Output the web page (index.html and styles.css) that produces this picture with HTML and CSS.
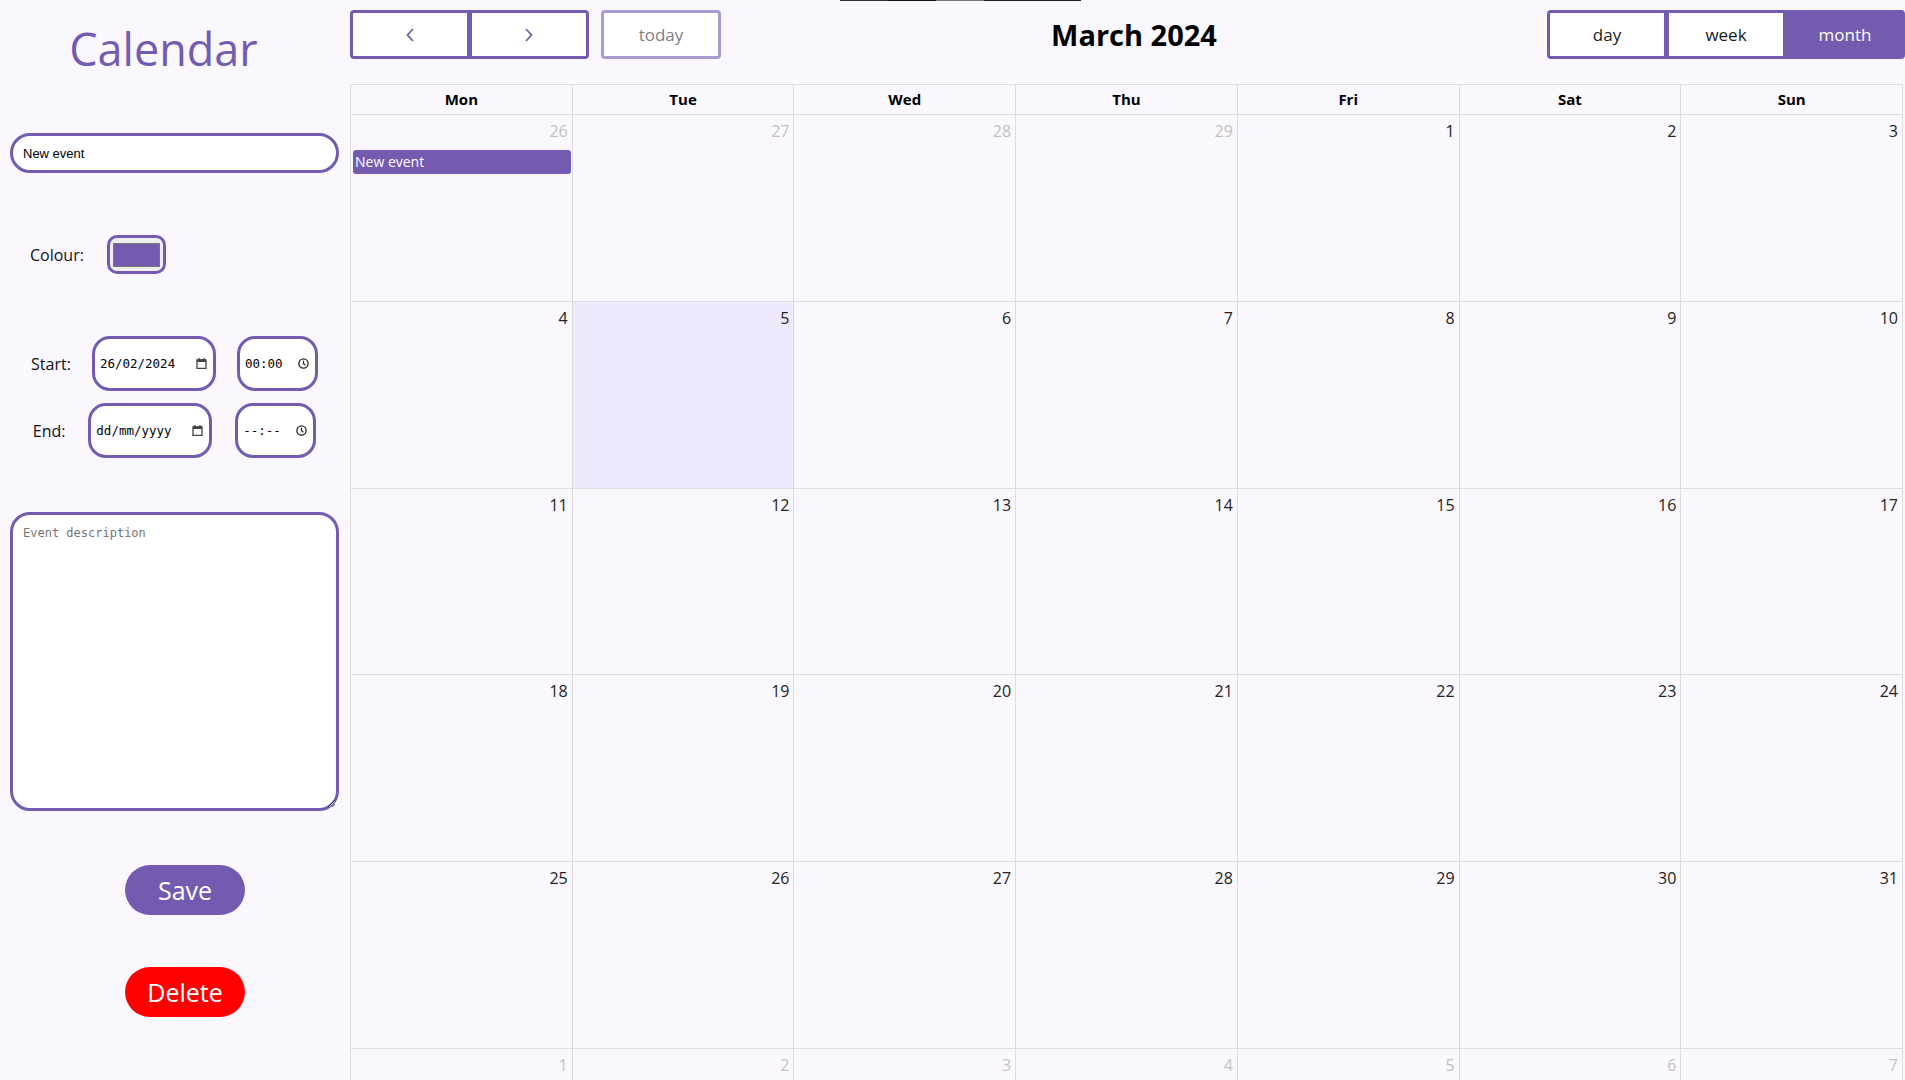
FILE: index.html
```html
<!DOCTYPE html>
<html lang="en">
<head>
<meta charset="utf-8">
<title>Calendar</title>
<link rel="stylesheet" href="styles.css">
</head>
<body>
<div class="top-mark"></div>
<aside class="sidebar">
  <h1 class="brand">Calendar</h1>
  <input class="title-input" type="text" value="New event">
  <div class="colour-row">
    <span class="label colour-label">Colour:</span>
    <span class="colour-pick"><span class="swatch"></span></span>
  </div>
  <div class="time-row">
    <span class="label">Start:</span>
    <span class="field date"><span class="val">26/02/2024</span>
      <svg class="ico" viewBox="0 0 11 11" width="11" height="11"><path d="M1 2h9v8.5H1z" fill="none" stroke="#444" stroke-width="1.3"/><path d="M1 1.5h9v2.5H1z" fill="#444"/><path d="M3 0v2M8 0v2" stroke="#444" stroke-width="1.3"/></svg>
    </span>
    <span class="field time"><span class="val">00:00</span>
      <svg class="ico" viewBox="0 0 11 11" width="11" height="11"><circle cx="5.5" cy="5.5" r="4.6" fill="none" stroke="#222" stroke-width="1.3"/><path d="M5.5 2.8v2.9l2 1.5" fill="none" stroke="#222" stroke-width="1.2"/></svg>
    </span>
  </div>
  <div class="time-row end">
    <span class="label">End:</span>
    <span class="field date"><span class="val">dd/mm/yyyy</span>
      <svg class="ico" viewBox="0 0 11 11" width="11" height="11"><path d="M1 2h9v8.5H1z" fill="none" stroke="#444" stroke-width="1.3"/><path d="M1 1.5h9v2.5H1z" fill="#444"/><path d="M3 0v2M8 0v2" stroke="#444" stroke-width="1.3"/></svg>
    </span>
    <span class="field time"><span class="val">--:--</span>
      <svg class="ico" viewBox="0 0 11 11" width="11" height="11"><circle cx="5.5" cy="5.5" r="4.6" fill="none" stroke="#222" stroke-width="1.3"/><path d="M5.5 2.8v2.9l2 1.5" fill="none" stroke="#222" stroke-width="1.2"/></svg>
    </span>
  </div>
  <textarea class="desc" placeholder="Event description"></textarea>
  <button class="pill save">Save</button>
  <button class="pill delete">Delete</button>
</aside>
<main class="calendar">
  <div class="toolbar">
    <div class="tb-left">
      <div class="group">
        <button class="btn"><svg viewBox="0 0 8 14" width="8" height="14"><polyline points="7,1 1.5,7 7,13" fill="none" stroke="#735cb0" stroke-width="1.8"/></svg></button>
        <button class="btn"><svg viewBox="0 0 8 14" width="8" height="14"><polyline points="1,1 6.5,7 1,13" fill="none" stroke="#735cb0" stroke-width="1.8"/></svg></button>
      </div>
      <button class="btn today">today</button>
    </div>
    <h2 class="title">March 2024</h2>
    <div class="group">
      <button class="btn">day</button>
      <button class="btn">week</button>
      <button class="btn active">month</button>
    </div>
  </div>
  <div class="grid">
    <div class="head">Mon</div><div class="head">Tue</div><div class="head">Wed</div><div class="head">Thu</div><div class="head">Fri</div><div class="head">Sat</div><div class="head">Sun</div>

    <div class="day other"><div class="num">26</div><div class="event">New event</div></div>
    <div class="day other"><div class="num">27</div></div>
    <div class="day other"><div class="num">28</div></div>
    <div class="day other"><div class="num">29</div></div>
    <div class="day"><div class="num">1</div></div>
    <div class="day"><div class="num">2</div></div>
    <div class="day"><div class="num">3</div></div>

    <div class="day"><div class="num">4</div></div>
    <div class="day today-cell"><div class="num">5</div></div>
    <div class="day"><div class="num">6</div></div>
    <div class="day"><div class="num">7</div></div>
    <div class="day"><div class="num">8</div></div>
    <div class="day"><div class="num">9</div></div>
    <div class="day"><div class="num">10</div></div>

    <div class="day"><div class="num">11</div></div>
    <div class="day"><div class="num">12</div></div>
    <div class="day"><div class="num">13</div></div>
    <div class="day"><div class="num">14</div></div>
    <div class="day"><div class="num">15</div></div>
    <div class="day"><div class="num">16</div></div>
    <div class="day"><div class="num">17</div></div>

    <div class="day"><div class="num">18</div></div>
    <div class="day"><div class="num">19</div></div>
    <div class="day"><div class="num">20</div></div>
    <div class="day"><div class="num">21</div></div>
    <div class="day"><div class="num">22</div></div>
    <div class="day"><div class="num">23</div></div>
    <div class="day"><div class="num">24</div></div>

    <div class="day"><div class="num">25</div></div>
    <div class="day"><div class="num">26</div></div>
    <div class="day"><div class="num">27</div></div>
    <div class="day"><div class="num">28</div></div>
    <div class="day"><div class="num">29</div></div>
    <div class="day"><div class="num">30</div></div>
    <div class="day"><div class="num">31</div></div>

    <div class="day other"><div class="num">1</div></div>
    <div class="day other"><div class="num">2</div></div>
    <div class="day other"><div class="num">3</div></div>
    <div class="day other"><div class="num">4</div></div>
    <div class="day other"><div class="num">5</div></div>
    <div class="day other"><div class="num">6</div></div>
    <div class="day other"><div class="num">7</div></div>
  </div>
</main>
</body>
</html>
```

FILE: styles.css
```css
* { box-sizing: border-box; }
html, body { margin: 0; padding: 0; }
body {
  background: #faf8fe;
  font-family: "Open Sans", "DejaVu Sans", sans-serif;
  color: #111;
  display: flex;
  align-items: flex-start;
}
.top-mark {
  position: absolute;
  top: 0;
  left: 840px;
  width: 241px;
  height: 1px;
  background: linear-gradient(to right, #333 0 48px, #111 48px 96px, #777 96px 144px, #222 144px);
}

/* sidebar */
.sidebar {
  width: 350px;
  flex: none;
  padding: 0 11px 0 10px;
  display: flex;
  flex-direction: column;
}
.brand {
  margin: 23px 0 0;
  padding-right: 22px;
  text-align: center;
  font-size: 45px;
  line-height: 52px;
  font-weight: 500;
  color: #735cb0;
}
.title-input {
  margin-top: 58px;
  height: 40px;
  width: 100%;
  border: 3px solid #735cb0;
  border-radius: 20px;
  padding: 0 10px;
  background: #fff;
  font-family: "Liberation Sans", Arial, sans-serif;
  font-size: 13px;
  color: #000;
  outline: none;
}
.label {
  font-size: 16px;
  color: #111;
}
.colour-row {
  margin-top: 62px;
  height: 39px;
  display: flex;
  align-items: center;
  padding-left: 20px;
}
.colour-label { width: 77px; }
.colour-pick {
  width: 59px;
  height: 39px;
  border: 3px solid #735cb0;
  border-radius: 10px;
  background: #efefef;
  padding: 5px 3px 4px;
  display: flex;
}
.swatch {
  flex: 1;
  background: #735cb0;
  border: 1px solid #777;
}
.time-row {
  margin-top: 62px;
  height: 55px;
  display: flex;
  align-items: center;
  justify-content: space-evenly;
}
.time-row.end { margin-top: 12px; }
.field {
  height: 55px;
  border: 3px solid #735cb0;
  border-radius: 18px;
  background: #fff;
  display: flex;
  align-items: center;
  justify-content: space-between;
  padding: 0 6px 0 5px;
  font-family: "DejaVu Sans Mono", monospace;
  font-size: 12.5px;
  color: #000;
}
.field.date { width: 124px; }
.field.time { width: 81px; }
.ico { flex: none; }
.desc {
  margin-top: 54px;
  width: 100%;
  height: 299px;
  border: 3px solid #735cb0;
  border-radius: 20px;
  padding: 11px 10px;
  background: #fff;
  font-family: "DejaVu Sans Mono", monospace;
  font-size: 12px;
  outline: none;
}
.desc::placeholder { color: #757575; }
.pill {
  align-self: flex-start;
  margin-left: 115px;
  width: 120px;
  height: 50px;
  border: none;
  border-radius: 25px;
  color: #fff;
  font-family: "Open Sans", sans-serif;
  font-size: 25px;
  padding: 0;
}
.save { margin-top: 54px; background: #735cb0; }
.delete { margin-top: 52px; background: #ff0000; }

/* calendar */
.calendar {
  flex: 1;
  min-width: 0;
  padding-top: 10px;
}
.toolbar {
  height: 49px;
  margin-bottom: 25px;
  display: flex;
  align-items: center;
  justify-content: space-between;
}
.tb-left { display: flex; gap: 12px; }
.group { display: flex; }
.btn {
  width: 120px;
  height: 49px;
  border: 3px solid #735cb0;
  background: #fff;
  font-family: "Open Sans", sans-serif;
  font-size: 17px;
  color: #1a1a1a;
  padding: 0;
  display: flex;
  align-items: center;
  justify-content: center;
  border-radius: 0;
}
.group .btn + .btn { margin-left: -1px; }
.group .btn:first-child { border-radius: 4px 0 0 4px; }
.group .btn:last-child { border-radius: 0 4px 4px 0; }
.btn.today {
  border-color: #a99bd2;
  color: #808080;
  border-radius: 4px;
}
.btn.active { background: #735cb0; color: #fff; }
.title {
  margin: 0;
  font-size: 29px;
  font-weight: 700;
  color: #000;
}
.grid {
  width: calc(100% - 2px);
  display: grid;
  grid-template-columns: repeat(7, 1fr);
  grid-template-rows: 30px repeat(6, 186.8px);
  border-top: 1px solid #ddd;
  border-left: 1px solid #ddd;
}
.head, .day {
  border-right: 1px solid #ddd;
  border-bottom: 1px solid #ddd;
}
.head {
  font-size: 15px;
  font-weight: 700;
  text-align: center;
  line-height: 29px;
  color: #000;
}
.num {
  padding: 4px 4px 0;
  line-height: 24px;
  font-size: 16px;
  text-align: right;
  color: #222;
}
.other .num { color: #c2c2c2; }
.today-cell { background: #eeeafc; }
.event {
  margin: 7px 1px 0 2px;
  height: 24px;
  line-height: 24px;
  padding: 0 2px;
  border-radius: 3px;
  background: #735cb0;
  color: #fff;
  font-size: 14px;
}
```
